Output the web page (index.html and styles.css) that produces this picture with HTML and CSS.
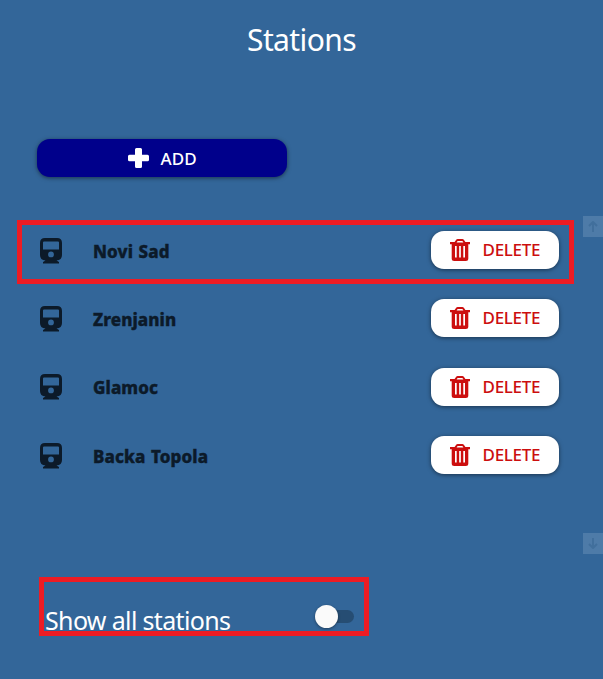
FILE: index.html
```
<!DOCTYPE html>
<html lang="en">
<head>
<meta charset="utf-8">
<title>Stations</title>
<link rel="stylesheet" href="styles.css">
</head>
<body>
<svg class="defs" aria-hidden="true">
  <symbol id="train" viewBox="0 0 22 26">
    <path fill-rule="evenodd" d="M5 0H17Q22 0 22 5V17Q22 22 16.500 22.500L19 24V25.500H3V24L5.500 22.500Q0 22 0 17V5Q0 0 5 0ZM4 3.500Q3 3.500 3 4.500V11.500H19V4.500Q19 3.500 18 3.500ZM11 13.500A2.900 2.900 0 1 0 11 19.300A2.900 2.900 0 1 0 11 13.500Z"/>
  </symbol>
  <symbol id="trash" viewBox="0 0 20 22">
    <path fill-rule="evenodd" d="M0 3H4.600L6 1Q6.600 0 7.700 0H12.300Q13.400 0 14 1L15.400 3H20V5.300H18.300V19.500Q18.300 22 15.800 22H4.200Q1.700 22 1.700 19.500V5.300H0ZM6.600 3.600H13.400L12.400 1.900H7.600ZM5 7V18.500H6.700V7ZM9.150 7V18.500H10.850V7ZM13.300 7V18.500H15V7Z"/>
  </symbol>
</svg>
<main class="page">
  <h1 class="title">Stations</h1>
  <button class="button add">
    <svg class="plus" viewBox="0 0 21 20"><path d="M8.500 0H12.500Q14 0 14 1.500V6.700H19.500Q21 6.700 21 8.200V11.800Q21 13.300 19.500 13.300H14V18.500Q14 20 12.500 20H8.500Q7 20 7 18.500V13.300H1.500Q0 13.300 0 11.800V8.200Q0 6.700 1.500 6.700H7V1.500Q7 0 8.500 0Z"/></svg>
    <span class="add-label">ADD</span>
  </button>
  <section class="list">
    <ul class="rows">
      <li class="row selected"><svg class="train"><use href="#train"/></svg><span class="name">Novi Sad</span><button class="button delete"><svg class="trash"><use href="#trash"/></svg><span>DELETE</span></button></li>
      <li class="row"><svg class="train"><use href="#train"/></svg><span class="name">Zrenjanin</span><button class="button delete"><svg class="trash"><use href="#trash"/></svg><span>DELETE</span></button></li>
      <li class="row"><svg class="train"><use href="#train"/></svg><span class="name">Glamoc</span><button class="button delete"><svg class="trash"><use href="#trash"/></svg><span>DELETE</span></button></li>
      <li class="row"><svg class="train"><use href="#train"/></svg><span class="name">Backa Topola</span><button class="button delete"><svg class="trash"><use href="#trash"/></svg><span>DELETE</span></button></li>
    </ul>
    <div class="scroll">
      <div class="arrow"><svg viewBox="0 0 10 11"><path d="M5 11V1M1 5L5 1L9 5"/></svg></div>
      <div class="arrow"><svg viewBox="0 0 10 11"><path d="M5 0V10M1 6L5 10L9 6"/></svg></div>
    </div>
  </section>
  <div class="filter">
    <span class="filter-label">Show all stations</span>
    <span class="toggle"><span class="thumb"></span></span>
  </div>
</main>
</body>
</html>
```
FILE: styles.css
```
* { box-sizing: border-box; }
body { margin: 0; background: #336699; font-family: "Noto Sans", "Open Sans", sans-serif; }
.defs { display: none; }
.page { display: flex; flex-direction: column; height: 679px; overflow: hidden; }
.title { margin: 20px 0 0; height: 40px; line-height: 40px; text-align: center; font-size: 30px; font-weight: 400; color: #fff; letter-spacing: -0.6px; }
.button { display: flex; align-items: center; border: 0; padding: 0; font: 500 17px/24px "Noto Sans", sans-serif; box-shadow: 0 1px 4px rgba(0, 0, 0, .5); }
.add { width: 250px; height: 38px; margin: 79.400px 0 0 37.400px; padding-left: 91px; gap: 11px; border-radius: 13px; background: #00008b; color: #fff; }
.plus { width: 21px; height: 20px; fill: #fff; }
.add-label { font-weight: 500; letter-spacing: 0.2px; padding-top: 1px; }
.list { display: flex; height: 338px; margin-top: 38.600px; justify-content: space-between; }
.rows { list-style: none; margin: 4px 0 0 17px; padding: 0; width: 557px; }
.row { display: flex; align-items: center; width: 557px; height: 64px; margin-bottom: 4.200px; padding: 0 14px 0 22px; border: 1px solid transparent; }
.selected { border: 5px solid #ed1c24; padding: 0 10px 0 18px; }
.train { width: 22px; height: 26px; fill: #0c1a29; margin-top: -2px; }
.name { margin-left: 31px; flex: 1; font-size: 17px; line-height: 24px; font-weight: 800; color: #0c1a29; -webkit-text-stroke: 0.4px #0c1a29; letter-spacing: 0.1px; word-spacing: 1px; }
.delete { width: 128px; height: 38px; margin-top: -3.600px; padding-left: 19px; gap: 12.500px; border-radius: 13px; background: #fff; color: #cc0e0e; letter-spacing: -0.3px; }
.trash { width: 20px; height: 22px; fill: #cc0e0e; }
.scroll { display: flex; flex-direction: column; justify-content: space-between; width: 20px; }
.arrow { display: flex; align-items: center; justify-content: center; height: 21px; background: #4e7ba8; }
.arrow svg { width: 10px; height: 11px; fill: none; stroke: #416f9c; stroke-width: 2; }
.filter { display: flex; align-items: center; width: 330px; height: 59px; margin: 23px 0 0 39px; border: 5px solid #ed1c24; }
.filter-label { width: 271px; padding-left: 1px; font-size: 25px; line-height: 34px; margin-top: 28px; color: #fff; white-space: nowrap; letter-spacing: -0.65px; }
.toggle { display: flex; align-items: center; width: 39px; height: 13px; border-radius: 7px; background: #264d73; margin-top: 20px; }
.thumb { flex: none; width: 23px; height: 23px; border-radius: 50%; background: #fafafa; box-shadow: 0 1px 3px rgba(0, 0, 0, .4); }
```
